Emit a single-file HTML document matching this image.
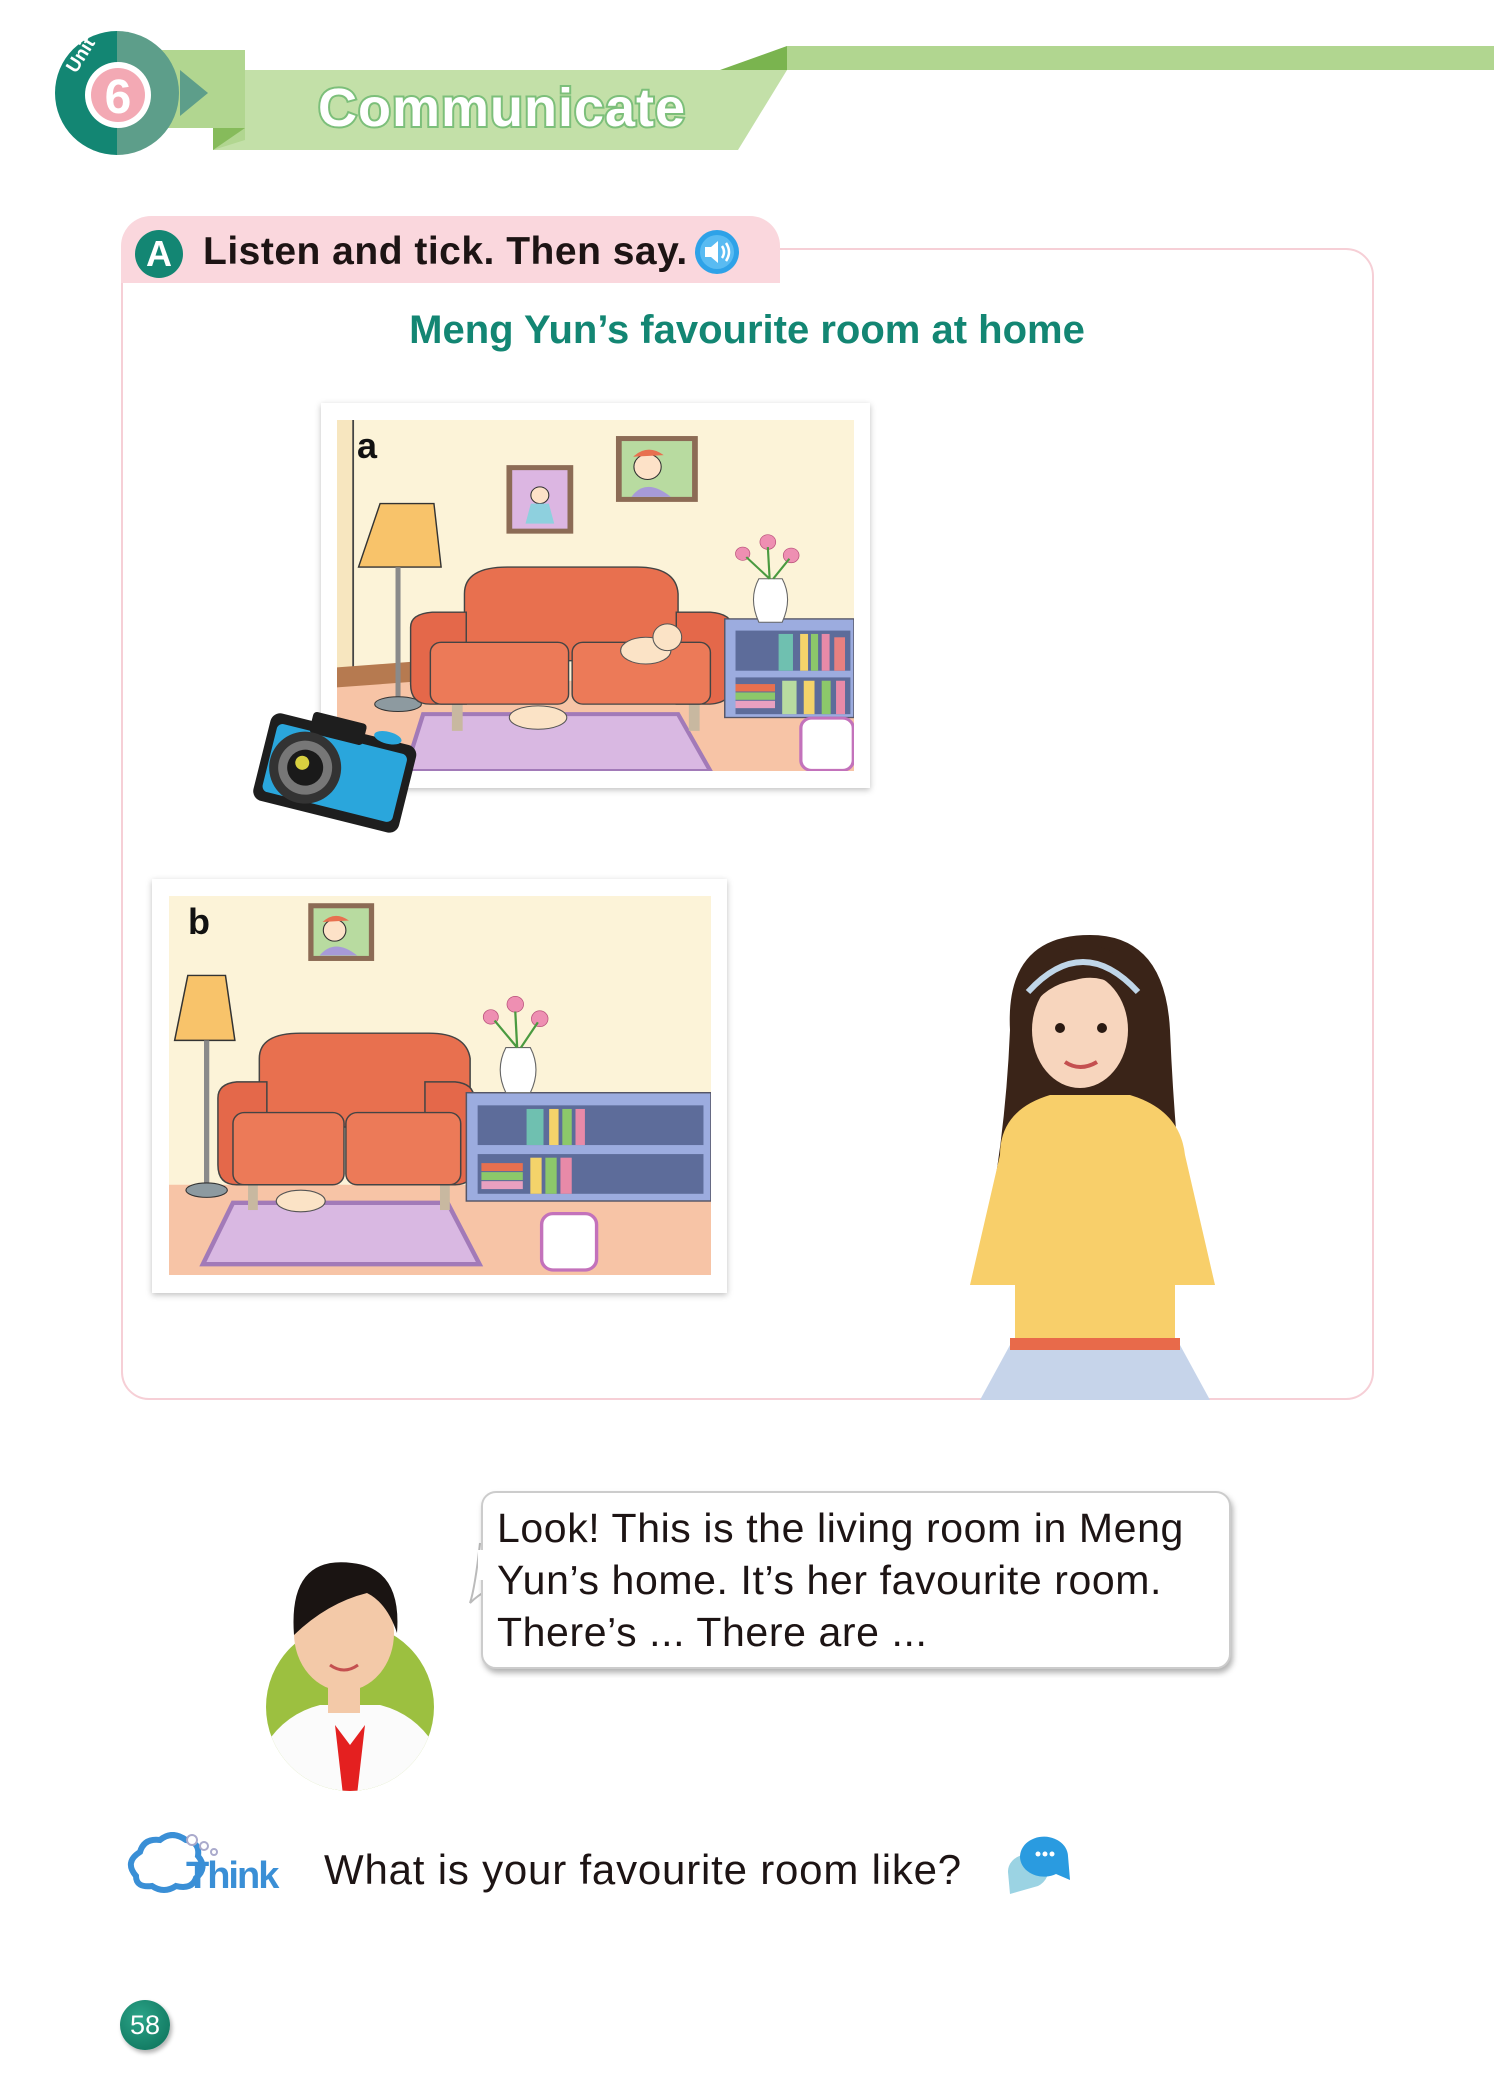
<!DOCTYPE html>
<html><head><meta charset="utf-8"><style>
*{margin:0;padding:0;box-sizing:border-box}
body{width:1494px;height:2092px;background:#fff;position:relative;overflow:hidden;font-family:"Liberation Sans",sans-serif}
.abs{position:absolute}
.pic{position:absolute;background:#fff;box-shadow:0 2px 6px rgba(0,0,0,.25)}
.lbl{position:absolute;font-weight:bold;font-size:36px;color:#111}
</style></head><body>

<div class="abs" style="left:787px;top:46px;width:707px;height:24px;background:#b1d690"></div>
<svg class="abs" style="left:0;top:0" width="800" height="160">
  <polygon points="720,70 787,46 787,70" fill="#7ab44f"/>
  <polygon points="213,70 787,70 738,150 213,150" fill="#c3e0a8"/>
  <polygon points="160,50 245,50 245,140 213,150 213,128 160,128" fill="#b1d690"/>
  <polygon points="213,128 245,128 213,150" fill="#86bb5b"/>
  <polygon points="180,70 208,93 180,116" fill="#5d9e8a"/>
  <path d="M117,31 A62,62 0 0 0 117,155 Z" fill="#138673"/>
  <path d="M117,31 A62,62 0 0 1 117,155 Z" fill="#5d9e8a"/>
  <circle cx="118" cy="95" r="33" fill="#fff"/>
  <circle cx="118" cy="95" r="27" fill="#f3a9b4"/>
  <text x="118" y="113" font-size="48" font-family="Liberation Sans" font-weight="bold" fill="#fff" text-anchor="middle">6</text>
  <text x="0" y="0" font-size="19" font-family="Liberation Sans" font-weight="bold" fill="#fff" transform="translate(76,74) rotate(-58)">Unit</text>
  <text x="318" y="126" font-size="54" font-family="Liberation Sans" font-weight="bold" fill="#fff" letter-spacing="1" style="paint-order:stroke" stroke="#7cbf7a" stroke-width="4">Communicate</text>
</svg>

<div class="abs" style="left:121px;top:248px;width:1253px;height:1152px;border:2px solid #f6cfd6;border-radius:28px"></div>
<div class="abs" style="left:121px;top:216px;width:659px;height:67px;background:#fad7dd;border-radius:30px 30px 0 0"></div>
<div class="abs" style="left:135px;top:230px;width:48px;height:48px;border-radius:50%;background:#138673;color:#fff;font-weight:bold;font-size:36px;text-align:center;line-height:48px">A</div>
<div class="abs" style="left:203px;top:230px;font-size:39px;font-weight:bold;color:#1d1414;letter-spacing:0.5px">Listen and tick. Then say.</div>
<svg class="abs" style="left:694px;top:229px" width="46" height="46"><circle cx="23" cy="23" r="22" fill="#2ea2e8"/><circle cx="23" cy="23" r="17" fill="#59bbf2"/><path d="M11,18h6l7,-6v22l-7,-6h-6z" fill="#fff"/><path d="M28,17q4,6 0,12M32,14q6,9 0,18" stroke="#fff" stroke-width="2.5" fill="none"/></svg>
<div class="abs" style="left:0;width:1494px;top:308px;text-align:center;font-size:40px;font-weight:bold;color:#138673">Meng Yun’s favourite room at home</div>

<div class="pic" style="left:321px;top:403px;width:549px;height:385px">
<svg class="abs" style="left:16px;top:17px" width="517" height="351" viewBox="0 0 1440 1050" preserveAspectRatio="none">
<rect width="1440" height="1050" fill="#fcf3d8"/>
<rect x="0" y="0" width="45" height="800" fill="#f7e6bf"/><line x1="45" y1="0" x2="45" y2="740" stroke="#444" stroke-width="5"/>
<polygon points="0,780 1440,780 1440,1050 0,1050" fill="#f7c4a6"/>
<polygon points="0,740 250,720 250,780 0,800" fill="#b67a50"/>
<rect x="472" y="135" width="186" height="205" fill="#8c6b55"/><rect x="488" y="150" width="154" height="175" fill="#dcb6e2"/>
<circle cx="565" cy="225" r="25" fill="#fde2c8" stroke="#333" stroke-width="3"/><path d="M540,250 h50 l15,60 h-80z" fill="#8ed0de"/>
<rect x="777" y="48" width="228" height="197" fill="#8c6b55"/><rect x="793" y="63" width="196" height="167" fill="#b8dba0"/>
<circle cx="865" cy="140" r="38" fill="#fde2c8" stroke="#333" stroke-width="3"/><path d="M825,110 q40,-40 85,-5 z" fill="#e8704f"/><path d="M820,230 q40,-60 110,0z" fill="#a79ad8"/>
<polygon points="120,250 270,250 290,440 60,440" fill="#f8c36a" stroke="#333" stroke-width="4"/>
<rect x="163" y="440" width="14" height="390" fill="#8a8a8a"/><ellipse cx="170" cy="850" rx="65" ry="22" fill="#8d9aa0" stroke="#333" stroke-width="3"/>
<polygon points="240,880 950,880 1040,1050 190,1050" fill="#d9b8e2" stroke="#a27ab8" stroke-width="12"/>
<rect x="320" y="840" width="30" height="90" fill="#c8b8a0"/><rect x="980" y="840" width="30" height="90" fill="#c8b8a0"/>
<path d="M355,720 V520 q0,-80 120,-80 h360 q110,0 115,80 V720z" fill="#e8704f" stroke="#444" stroke-width="4"/>
<path d="M205,620 q0,-40 60,-45 h95 V850 H260 q-55,0 -55,-60z" fill="#e4684a" stroke="#444" stroke-width="4"/>
<path d="M1100,620 q0,-40 -60,-45 h-95 V850 h85 q70,0 70,-60z" fill="#e4684a" stroke="#444" stroke-width="4"/>
<rect x="260" y="665" width="385" height="185" rx="30" fill="#ec7a58" stroke="#444" stroke-width="4"/>
<rect x="655" y="665" width="385" height="185" rx="30" fill="#ec7a58" stroke="#444" stroke-width="4"/>
<ellipse cx="860" cy="690" rx="70" ry="40" fill="#fbe3c6" stroke="#555" stroke-width="3"/><circle cx="920" cy="650" r="40" fill="#fbe3c6" stroke="#555" stroke-width="3"/>
<ellipse cx="560" cy="890" rx="80" ry="35" fill="#fbe3c6" stroke="#555" stroke-width="3"/>
<rect x="1080" y="595" width="360" height="295" fill="#9cacdf" stroke="#556" stroke-width="4"/>
<rect x="1110" y="630" width="320" height="120" fill="#5d6c9a"/><rect x="1110" y="770" width="320" height="110" fill="#5d6c9a"/>
<g fill="#6fc0b0"><rect x="1230" y="640" width="40" height="110"/><rect x="1290" y="640" width="22" height="110" fill="#f4d36a"/><rect x="1320" y="640" width="20" height="110" fill="#8cc86a"/><rect x="1350" y="640" width="22" height="110" fill="#e88aa8"/><rect x="1385" y="650" width="30" height="100" fill="#e88080"/></g>
<g><rect x="1110" y="790" width="110" height="22" fill="#e8704f"/><rect x="1110" y="815" width="110" height="22" fill="#8cc86a"/><rect x="1110" y="840" width="110" height="22" fill="#e8a0c0"/><rect x="1240" y="780" width="40" height="100" fill="#b8dba0"/><rect x="1300" y="780" width="30" height="100" fill="#f4d36a"/><rect x="1350" y="780" width="25" height="100" fill="#8cc86a"/><rect x="1390" y="780" width="25" height="100" fill="#e88aa8"/></g>
<path d="M1175,475 q-30,60 0,130 h65 q30,-70 0,-130z" fill="#fff" stroke="#666" stroke-width="3"/>
<g fill="#ee8fb2" stroke="#b8507a" stroke-width="2"><circle cx="1200" cy="365" r="22"/><circle cx="1130" cy="400" r="20"/><circle cx="1265" cy="405" r="22"/></g>
<path d="M1205,475 L1200,380 M1205,475 L1140,410 M1215,475 L1260,415" stroke="#4a9a40" stroke-width="6"/>
<rect x="1292" y="892" width="146" height="156" rx="30" fill="#fff" stroke="#c372bb" stroke-width="9"/>
</svg>
<div class="lbl" style="left:36px;top:22px">a</div>
</div>

<svg class="abs" style="left:240px;top:700px" width="190" height="145">
<g transform="rotate(14 95 72)">
<rect x="20" y="28" width="150" height="90" rx="10" fill="#1e1e1e"/>
<rect x="28" y="38" width="134" height="70" rx="6" fill="#2aa6dc"/>
<rect x="60" y="18" width="55" height="22" rx="4" fill="#1e1e1e"/>
<ellipse cx="138" cy="26" rx="14" ry="6" fill="#2aa6dc"/>
<circle cx="65" cy="75" r="36" fill="#333"/><circle cx="65" cy="75" r="27" fill="#777"/><circle cx="65" cy="75" r="18" fill="#1a1a1a"/><circle cx="61" cy="71" r="7" fill="#d8d040"/>
</g></svg>

<div class="pic" style="left:152px;top:879px;width:575px;height:414px">
<svg class="abs" style="left:17px;top:17px" width="542" height="379" viewBox="0 0 1440 1050" preserveAspectRatio="none">
<rect width="1440" height="1050" fill="#fcf3d8"/>
<polygon points="0,800 1440,800 1440,1050 0,1050" fill="#f7c4a6"/>
<rect x="370" y="20" width="175" height="160" fill="#8c6b55"/><rect x="384" y="34" width="147" height="132" fill="#b8dba0"/>
<circle cx="440" cy="95" r="30" fill="#fde2c8" stroke="#333" stroke-width="3"/><path d="M408,72 q32,-32 70,-4z" fill="#e8704f"/><path d="M400,165 q40,-50 100,0z" fill="#a79ad8"/>
<polygon points="50,220 150,220 175,400 15,400" fill="#f8c36a" stroke="#333" stroke-width="4"/>
<rect x="93" y="400" width="14" height="400" fill="#8a8a8a"/><ellipse cx="100" cy="815" rx="55" ry="20" fill="#8d9aa0" stroke="#333" stroke-width="3"/>
<polygon points="170,850 740,850 825,1020 90,1020" fill="#d9b8e2" stroke="#a27ab8" stroke-width="12"/>
<rect x="210" y="790" width="26" height="80" fill="#c8b8a0"/><rect x="720" y="790" width="26" height="80" fill="#c8b8a0"/>
<path d="M240,640 V450 q0,-70 110,-70 h340 q100,0 110,70 V640z" fill="#e8704f" stroke="#444" stroke-width="4"/>
<path d="M130,560 q0,-40 50,-45 h80 V800 H180 q-50,0 -50,-55z" fill="#e4684a" stroke="#444" stroke-width="4"/>
<path d="M810,560 q0,-40 -50,-45 h-80 V800 h80 q50,0 50,-55z" fill="#e4684a" stroke="#444" stroke-width="4"/>
<rect x="170" y="600" width="295" height="200" rx="30" fill="#ec7a58" stroke="#444" stroke-width="4"/>
<rect x="470" y="600" width="305" height="200" rx="30" fill="#ec7a58" stroke="#444" stroke-width="4"/>
<ellipse cx="350" cy="845" rx="65" ry="30" fill="#fbe3c6" stroke="#555" stroke-width="3"/>
<rect x="790" y="545" width="650" height="300" fill="#9cacdf" stroke="#556" stroke-width="4"/>
<rect x="820" y="580" width="600" height="110" fill="#5d6c9a"/><rect x="820" y="715" width="600" height="110" fill="#5d6c9a"/>
<g><rect x="950" y="590" width="45" height="100" fill="#6fc0b0"/><rect x="1010" y="590" width="25" height="100" fill="#f4d36a"/><rect x="1045" y="590" width="25" height="100" fill="#8cc86a"/><rect x="1080" y="590" width="25" height="100" fill="#e88aa8"/><rect x="830" y="740" width="110" height="22" fill="#e8704f"/><rect x="830" y="765" width="110" height="22" fill="#8cc86a"/><rect x="830" y="790" width="110" height="22" fill="#e8a0c0"/><rect x="960" y="725" width="30" height="100" fill="#f4d36a"/><rect x="1000" y="725" width="30" height="100" fill="#8cc86a"/><rect x="1040" y="725" width="30" height="100" fill="#e88aa8"/></g>
<path d="M895,420 q-30,60 0,125 h65 q30,-65 0,-125z" fill="#fff" stroke="#666" stroke-width="3"/>
<g fill="#ee8fb2" stroke="#b8507a" stroke-width="2"><circle cx="920" cy="300" r="22"/><circle cx="855" cy="335" r="20"/><circle cx="985" cy="340" r="22"/></g>
<path d="M925,420 L920,320 M925,420 L865,345 M935,420 L980,350" stroke="#4a9a40" stroke-width="6"/>
<rect x="990" y="880" width="146" height="156" rx="30" fill="#fff" stroke="#c372bb" stroke-width="9"/>
</svg>
<div class="lbl" style="left:36px;top:22px">b</div>
</div>

<!-- girl -->
<svg class="abs" style="left:930px;top:930px" width="320" height="470">
<path d="M80,100 q-5,-95 80,-95 q75,0 80,95 q5,120 20,230 l-210,0 q25,-110 30,-230z" fill="#3a2418"/>
<path d="M70,225 q0,-45 50,-60 h80 q50,15 55,60 l30,130 h-40 v60 H85 v-60 H40z" fill="#f8cf6a"/>
<path d="M80,415 h170 l30,55 H50z" fill="#c6d4ea"/>
<rect x="80" y="408" width="170" height="12" fill="#e86a4a"/>
<ellipse cx="150" cy="100" rx="48" ry="58" fill="#f7d5bd"/>
<path d="M100,80 q10,-65 60,-65 q45,5 45,60 q-25,-35 -60,-25 q-30,5 -45,30z" fill="#3a2418"/>
<path d="M98,62 q55,-60 110,0" stroke="#c0d6e8" stroke-width="6" fill="none"/>
<path d="M135,132 q15,10 32,0" stroke="#c45050" stroke-width="4" fill="none"/>
<circle cx="130" cy="98" r="5" fill="#2a1a12"/><circle cx="172" cy="98" r="5" fill="#2a1a12"/>
</svg>

<svg class="abs" style="left:430px;top:1488px" width="810" height="190">
<path d="M50,55 q-5,45 -10,60 q20,-20 50,-20" fill="#fff" stroke="#bbb" stroke-width="2"/>
<rect x="52" y="4" width="748" height="176" rx="14" fill="#fff" stroke="#ccc" stroke-width="2" style="filter:drop-shadow(2px 4px 3px rgba(0,0,0,.3))"/>
<rect x="48" y="62" width="10" height="30" fill="#fff"/>
</svg>
<div class="abs" style="left:497px;top:1502px;font-size:41px;line-height:52px;color:#1d1414;letter-spacing:0.6px">Look! This is the living room in Meng<br>Yun’s home. It’s her favourite room.<br>There’s ... There are ...</div>

<svg class="abs" style="left:260px;top:1555px" width="180" height="240">
<defs><clipPath id="cc"><circle cx="90" cy="152" r="84"/></clipPath></defs>
<circle cx="90" cy="152" r="84" fill="#9cc040"/>
<g clip-path="url(#cc)"><path d="M0,200 q20,-40 60,-50 h60 q40,10 60,50 v60 H0z" fill="#fbfbfb"/><path d="M75,170 l15,20 l15,-20 l-8,70 h-14z" fill="#e42020"/></g>
<ellipse cx="84" cy="78" rx="50" ry="58" fill="#f3c9a8"/>
<path d="M34,80 q-6,-80 58,-72 q50,5 45,70 q-10,-30 -30,-40 q-40,10 -73,42z" fill="#1a1412"/>
<rect x="68" y="128" width="32" height="30" fill="#f3c9a8"/>
<path d="M70,110 q14,10 28,0" stroke="#c45050" stroke-width="3" fill="none"/>
</svg>

<svg class="abs" style="left:122px;top:1832px" width="180" height="64">
<path d="M14,44 q-12,-14 4,-24 q4,-14 20,-12 q12,-10 26,0 q14,2 12,16 q10,12 -2,22 q-4,12 -20,8 q-12,8 -24,0 q-16,2 -16,-10z" fill="#fff" stroke="#3a8fd6" stroke-width="6"/>
<circle cx="70" cy="8" r="5" fill="#fff" stroke="#aac" stroke-width="2"/><circle cx="82" cy="14" r="4" fill="#fff" stroke="#aac" stroke-width="2"/><circle cx="92" cy="20" r="3" fill="#fff" stroke="#aac" stroke-width="2"/>
<text x="64" y="56" font-size="38" font-weight="bold" font-family="Liberation Sans" fill="#3a8fd6" letter-spacing="-2">Think</text>
</svg>
<div class="abs" style="left:324px;top:1846px;font-size:42px;color:#1d1414;letter-spacing:0.8px">What is your favourite room like?</div>
<svg class="abs" style="left:1000px;top:1834px" width="72" height="60">
<path d="M8,38 a20,17 0 1 1 30,14 l-28,8z" fill="#9bd3e3"/>
<path d="M68,22 a24,20 0 1 0 -12,18 l14,6z" fill="#2a9be0"/>
<circle cx="38" cy="20" r="2.5" fill="#fff"/><circle cx="45" cy="20" r="2.5" fill="#fff"/><circle cx="52" cy="20" r="2.5" fill="#fff"/>
</svg>

<div class="abs" style="left:120px;top:2000px;width:50px;height:50px;border-radius:50%;background:radial-gradient(circle at 40% 35%,#2ba488,#0b6e57);color:#fff;font-size:27px;text-align:center;line-height:50px;box-shadow:2px 3px 4px rgba(0,0,0,.3)">58</div>
</body></html>
